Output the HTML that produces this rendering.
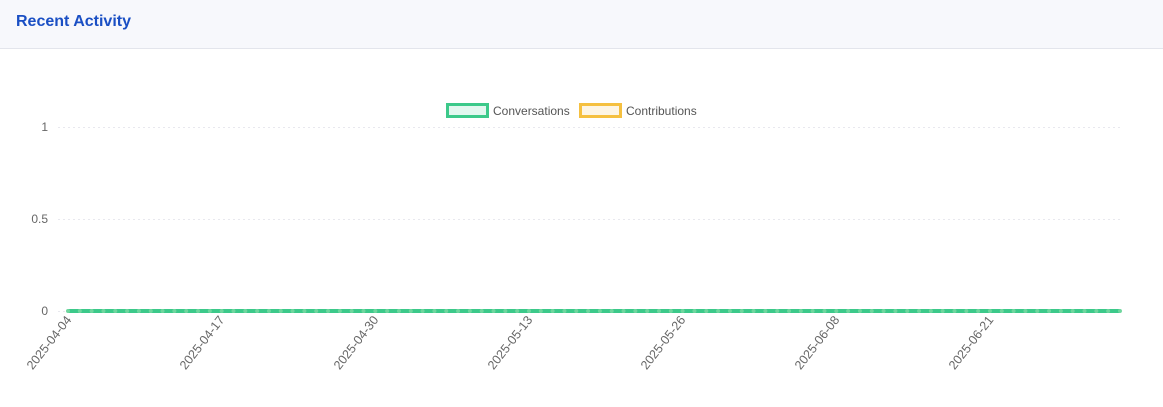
<!DOCTYPE html>
<html><head><meta charset="utf-8"><style>
body{margin:0;width:1163px;height:407px;background:#fff;font-family:"Liberation Sans",Arial,sans-serif;overflow:hidden}
.hd{height:49px;background:#f7f8fc;border-bottom:1px solid #e3e5ec;box-sizing:border-box}
.hd h3{margin:0;position:absolute;left:16px;top:13px;font-size:16px;font-weight:bold;color:#1a4fc4}
</style></head><body>
<div class="hd"><h3>Recent Activity</h3></div>
<svg width="1163" height="359" style="position:absolute;left:0;top:48px" font-family="Liberation Sans, Arial, sans-serif">
<g stroke="#e8e8ee" stroke-dasharray="2 3" stroke-width="1">
<line x1="58" y1="79.5" x2="1120" y2="79.5"/>
<line x1="58" y1="171.5" x2="1120" y2="171.5"/>
<line x1="58" y1="263.5" x2="68" y2="263.5"/>
</g>
<g fill="#666" font-size="12" text-anchor="end">
<text x="48" y="83">1</text><text x="48" y="175">0.5</text><text x="48" y="267">0</text>
</g>
<rect x="447.5" y="56.5" width="40" height="12" fill="#e2f7ef" stroke="#3cc98a" stroke-width="3"/>
<text x="493" y="67" font-size="12" fill="#555">Conversations</text>
<rect x="580.5" y="56.5" width="40" height="12" fill="#fdf5e4" stroke="#f5c040" stroke-width="3"/>
<text x="626" y="67" font-size="12" fill="#555">Contributions</text>
<line x1="68" y1="263" x2="1120" y2="263" stroke="#3cc98a" stroke-width="4"/>
<line x1="68" y1="263" x2="1121" y2="263" stroke="#6fd69e" stroke-width="4" stroke-linecap="round" stroke-dasharray="0 11.82"/>
<g fill="#666" font-size="12.5" text-anchor="end">
<text transform="translate(72,272) rotate(-52)">2025-04-04</text>
<text transform="translate(225,272) rotate(-52)">2025-04-17</text>
<text transform="translate(379,272) rotate(-52)">2025-04-30</text>
<text transform="translate(533,272) rotate(-52)">2025-05-13</text>
<text transform="translate(686,272) rotate(-52)">2025-05-26</text>
<text transform="translate(840,272) rotate(-52)">2025-06-08</text>
<text transform="translate(994,272) rotate(-52)">2025-06-21</text>
</g>
</svg>
</body></html>
